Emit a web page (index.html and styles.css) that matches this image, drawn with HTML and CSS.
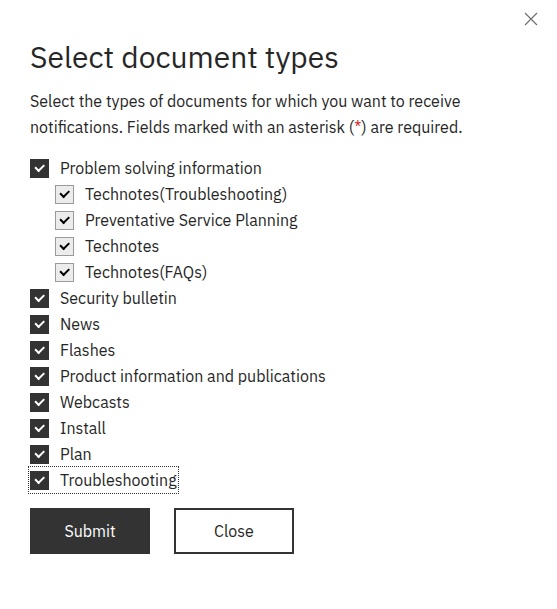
FILE: index.html
```html
<!DOCTYPE html>
<html lang="en">
<head>
<meta charset="utf-8">
<title>Select document types</title>
<link rel="stylesheet" href="styles.css">
</head>
<body>
<div class="modal">
  <button class="close-x" aria-label="Close">
    <svg width="14" height="14" viewBox="0 0 14 14"><path d="M1 1L13 13M13 1L1 13" stroke="#6f6f6f" stroke-width="1.2" fill="none"/></svg>
  </button>
  <h1 class="title">Select document types</h1>
  <p class="desc">Select the types of documents for which you want to receive notifications. Fields marked with an asterisk (<span class="req">*</span>) are required.</p>
  <ul class="list">
    <li class="item"><span class="box"></span><span class="label">Problem solving information</span></li>
    <li class="item sub"><span class="box light"></span><span class="label">Technotes(Troubleshooting)</span></li>
    <li class="item sub"><span class="box light"></span><span class="label">Preventative Service Planning</span></li>
    <li class="item sub"><span class="box light"></span><span class="label">Technotes</span></li>
    <li class="item sub"><span class="box light"></span><span class="label">Technotes(FAQs)</span></li>
    <li class="item"><span class="box"></span><span class="label">Security bulletin</span></li>
    <li class="item"><span class="box"></span><span class="label">News</span></li>
    <li class="item"><span class="box"></span><span class="label">Flashes</span></li>
    <li class="item"><span class="box"></span><span class="label">Product information and publications</span></li>
    <li class="item"><span class="box"></span><span class="label">Webcasts</span></li>
    <li class="item"><span class="box"></span><span class="label">Install</span></li>
    <li class="item"><span class="box"></span><span class="label">Plan</span></li>
    <li class="item focused"><span class="box"></span><span class="label">Troubleshooting</span></li>
  </ul>
  <div class="actions">
    <button class="btn primary">Submit</button>
    <button class="btn secondary">Close</button>
  </div>
</div>
</body>
</html>
```
FILE: styles.css
```css
html, body {
  margin: 0;
  padding: 0;
  background: #ffffff;
}
body {
  font-family: "IBM Plex Sans", "Open Sans", "Noto Sans", sans-serif;
  color: #262626;
}
.modal {
  position: relative;
  padding: 37px 30px 40px 30px;
}
.close-x {
  position: absolute;
  top: 11px;
  right: 18px;
  width: 16px;
  height: 16px;
  padding: 0;
  border: 0;
  background: none;
  display: flex;
  align-items: center;
  justify-content: center;
}
.title {
  margin: 0;
  font-size: 30px;
  font-weight: 400;
  line-height: 40px;
  color: #262626;
}
.desc {
  margin: 11px 0 0 0;
  font-size: 16px;
  line-height: 26px;
  color: #262626;
  max-width: 460px;
}
.req {
  color: #da1e28;
}
.list {
  list-style: none;
  margin: 18px 0 0 0;
  padding: 0;
  display: flex;
  flex-direction: column;
  gap: 6px;
}
.item {
  display: flex;
  align-items: center;
  gap: 11px;
  height: 20px;
  font-size: 16px;
  line-height: 20px;
  width: max-content;
}
.item.sub {
  padding-left: 25px;
}
.item.focused {
  height: 26px;
  padding: 0 1px;
  margin: -3px -1px;
  outline: 1px dotted #333;
  outline-offset: 0;
}
.box {
  width: 19px;
  height: 19px;
  box-sizing: border-box;
  background: #333333;
  flex: none;
  position: relative;
}
.box::after {
  content: "";
  position: absolute;
  left: 5px;
  top: 5px;
  width: 7px;
  height: 3.5px;
  border-left: 2px solid #ffffff;
  border-bottom: 2px solid #ffffff;
  transform: rotate(-45deg);
}
.box.light {
  background: #ececec;
  border: 1px solid #9a9a9a;
}
.box.light::after {
  left: 4px;
  top: 4px;
  border-color: #000000;
}
.actions {
  display: flex;
  gap: 24px;
  margin-top: 18px;
}
.btn {
  width: 120px;
  height: 46px;
  font-family: inherit;
  font-size: 16px;
  box-sizing: border-box;
  cursor: pointer;
}
.btn.primary {
  background: #333333;
  color: #ffffff;
  border: 0;
  font-weight: 400;
}
.btn.secondary {
  background: #ffffff;
  color: #262626;
  border: 2px solid #333333;
}
```
